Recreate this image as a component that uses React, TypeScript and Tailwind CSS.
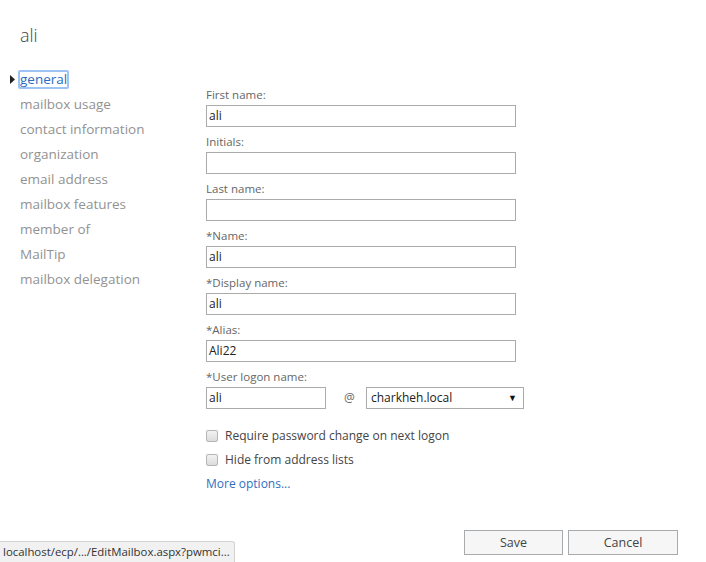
import React from "react";

const font = { fontFamily: '"Open Sans", "Noto Sans", Arial, sans-serif' };

function Field({ label, value }: { label: string; value?: string }) {
  return (
    <div className="flex flex-col">
      <div className="h-[16px] text-[11.5px] leading-[16px] text-[#666]">{label}</div>
      <div className="mt-[2px] flex h-[22px] w-[310px] items-center border border-[#ababab] bg-white px-[2px] text-[12px] text-[#222]">
        {value}
      </div>
    </div>
  );
}

function Check({ label }: { label: string }) {
  return (
    <div className="flex h-[16px] items-center">
      <div className="h-[12px] w-[12px] rounded-[2px] border border-[#b5b5b5] bg-gradient-to-b from-[#f2f2f2] to-[#dcdcdc]" />
      <span className="ml-[7px] text-[12px] text-[#444]">{label}</span>
    </div>
  );
}

export default function App() {
  const nav = [
    "mailbox usage",
    "contact information",
    "organization",
    "email address",
    "mailbox features",
    "member of",
    "MailTip",
    "mailbox delegation",
  ];
  return (
    <div className="relative h-[562px] w-[706px] overflow-hidden bg-white" style={font}>
      <div className="flex flex-col">
        <div className="pl-[20px] pt-[23px] text-[18px] font-light leading-[24px] text-[#444]">ali</div>
        <div className="mt-[9px] flex">
          <div className="w-[206px] shrink-0 pt-[11px]">
            <div className="relative flex h-[25px] items-center pl-[18px]">
              <svg className="absolute left-[10px] top-[8px]" width="5" height="9" viewBox="0 0 5 9">
                <path d="M0 0 L5 4.5 L0 9 Z" fill="#222" />
              </svg>
              <span className="rounded-[2px] border-2 border-[#9ec3f5] px-[0px] text-[13.5px] leading-[15px] text-[#2a6cc0]">
                general
              </span>
            </div>
            {nav.map((n) => (
              <div key={n} className="flex h-[25px] items-center pl-[20px] text-[13.5px] text-[#929292]">
                {n}
              </div>
            ))}
          </div>
          <div className="flex flex-col gap-[7px] pt-[31px]">
            <Field label="First name:" value="ali" />
            <Field label="Initials:" />
            <Field label="Last name:" />
            <Field label="*Name:" value="ali" />
            <Field label="*Display name:" value="ali" />
            <Field label="*Alias:" value="Ali22" />
            <div className="flex flex-col">
              <div className="h-[16px] text-[11.5px] leading-[16px] text-[#666]">*User logon name:</div>
              <div className="mt-[2px] flex items-center">
                <div className="flex h-[22px] w-[120px] items-center border border-[#ababab] px-[2px] text-[12px] text-[#222]">
                  ali
                </div>
                <span className="ml-[18px] w-[22px] text-[12px] text-[#666]">@</span>
                <div className="flex h-[22px] w-[158px] items-center justify-between border border-[#ababab] pl-[4px] pr-[6px] text-[12px] text-[#222]">
                  <span>charkheh.local</span>
                  <span className="text-[9px] text-[#111]">▼</span>
                </div>
              </div>
            </div>
            <div className="mt-[12px] flex flex-col gap-[8px]">
              <Check label="Require password change on next logon" />
              <Check label="Hide from address lists" />
              <div className="h-[16px] text-[12px] leading-[16px] text-[#2f6fbf]">More options...</div>
            </div>
          </div>
        </div>
        <div className="mt-[38px] flex justify-end gap-[5px] pr-[28px]">
          <button className="h-[25px] w-[99px] border border-[#a8abad] bg-[#f6f6f6] pt-[2px] text-[12.5px] text-[#444]">Save</button>
          <button className="h-[25px] w-[110px] border border-[#a8abad] bg-[#f6f6f6] pt-[2px] text-[12.5px] text-[#444]">Cancel</button>
        </div>
      </div>
      <div className="absolute bottom-0 left-0 flex h-[21px] items-center rounded-tr-[3px] border-r border-t border-[#d3d3d3] bg-[#f1f1f1] pl-[3px] pr-[4px] text-[11.4px] text-[#333]">
        localhost/ecp/.../EditMailbox.aspx?pwmci...
      </div>
    </div>
  );
}
